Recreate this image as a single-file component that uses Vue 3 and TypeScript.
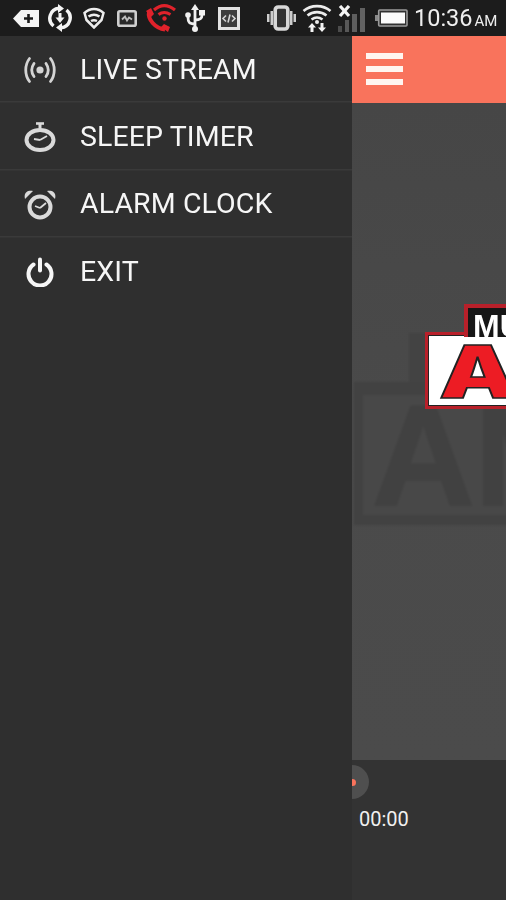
<script setup lang="ts">
const items = [
  { label: 'LIVE STREAM', icon: 'live' },
  { label: 'SLEEP TIMER', icon: 'sleep' },
  { label: 'ALARM CLOCK', icon: 'alarm' },
  { label: 'EXIT', icon: 'exit' },
]
</script>

<template>
  <div class="phone">
    <header class="status">
      <svg class="s-key" width="26" height="17" viewBox="0 0 26 17"><path d="M0 8.500 8 0h18v17H8z" fill="#f4f4f4"/><path d="M15.500 4v9M11 8.500h9" stroke="#1b1b1b" stroke-width="2.600"/></svg>
      <svg class="s-sync" width="26" height="28" viewBox="0 0 26 28" fill="none" stroke="#f4f4f4" stroke-width="3.400"><path d="M6.500 22A10 10 0 0 1 12 4.300"/><path d="M19.500 6A10 10 0 0 1 14 23.700"/><path d="M11 0v9l6-4.500zM15 28v-9l-6 4.500z" fill="#f4f4f4" stroke="none"/><path d="M13 9v6" stroke-width="3"/><path d="M8.500 13.500h9L13 19z" fill="#f4f4f4" stroke="none"/></svg>
      <svg class="s-shield" width="22" height="22" viewBox="0 0 22 22" fill="none" stroke="#ececec" stroke-width="2.500"><path d="M1.500 6C7 .8 15 .8 20.500 6L18.500 13 11 20.500 3.500 13z"/><path d="M5.500 9.500c3.500-2.300 7.500-2.300 11 0"/><path d="M8 14c2-1 4-1 6 0"/></svg>
      <svg class="s-box" width="20" height="17" viewBox="0 0 20 17"><rect x="1.300" y="1.300" width="17.400" height="14.400" rx="1.500" fill="#2a2a2a" stroke="#cfcfcf" stroke-width="2.600"/><path d="M5 9.500 8 6.500l2 4 2-3 3 2" fill="none" stroke="#bdbdbd" stroke-width="1.800"/></svg>
      <svg class="s-red" width="31" height="28" viewBox="0 0 31 28" fill="none" stroke="#e0222b"><path d="M9 6c6.500-5.500 14-5.500 21 0" stroke-width="3.200"/><path d="M13.500 10.500c3.500-2.500 8-2.500 12 0" stroke-width="3"/><circle cx="19.500" cy="14.500" r="2.200" fill="#e0222b" stroke="none"/><path d="M4 8C2.500 15 10 24.500 20 25.500" stroke-width="4"/><path d="M1 7 6 4l3 6-3 3zM16 23l3-3 6 3-2 5z" fill="#e0222b" stroke="none"/></svg>
      <svg class="s-usb" width="20" height="28" viewBox="0 0 20 28" fill="none" stroke="#f0f0f0" stroke-width="2.800"><path d="M10 3v22"/><path d="M10 20c-6 0-7-2-7-7"/><path d="M10 16c6 0 7-2 7-5"/><circle cx="3" cy="11" r="2.800" fill="#f0f0f0" stroke="none"/><rect x="14" y="6" width="6" height="5.500" fill="#f0f0f0" stroke="none"/><path d="M10 0 6 6h8z" fill="#f0f0f0" stroke="none"/><circle cx="10" cy="25" r="3" fill="#f0f0f0" stroke="none"/></svg>
      <svg class="s-code" width="22" height="23" viewBox="0 0 22 23" fill="none"><rect x="1.500" y="1.500" width="19" height="20" fill="#3c3c3c" stroke="#e2e2e2" stroke-width="3"/><path d="M8 8.500 5 11.500l3 3M14 8.500l3 3-3 3M12 7.500l-2 8" stroke="#d4d4d4" stroke-width="1.600"/></svg>

      <svg class="s-vib" width="29" height="26" viewBox="0 0 29 26" fill="#cdcdcd"><rect x="8.200" y="2" width="12.600" height="22" rx="3" fill="#333" stroke="#d8d8d8" stroke-width="3.600"/><path d="M0 9h2.500v8H0zM3.500 6H6v14H3.500zM23 6h2.500v14H23zM26.500 9H29v8h-2.500z"/></svg>
      <svg class="s-wifi" width="30" height="28" viewBox="0 0 30 28" fill="none" stroke="#ececec" stroke-width="2.600"><path d="M1.500 7c7.500-6.500 19.500-6.500 27 0"/><path d="M5.500 11.500c5.500-4.500 13.500-4.500 19 0"/><path d="M9.500 15.500c3.500-2.500 7.500-2.500 11 0"/><circle cx="15" cy="18" r="2" fill="#ececec" stroke="none"/><path d="M10 19l-4 4.500h2.500V28h3v-4.500H14zM20 28l4-4.500h-2.500V19h-3v4.500H16z" fill="#f4f4f4" stroke="none"/></svg>
      <svg class="s-sig" width="28" height="27" viewBox="0 0 28 27"><rect x="0" y="21" width="4" height="6" fill="#4c4c4c"/><rect x="7" y="15" width="4" height="12" fill="#585858"/><rect x="14" y="9" width="5" height="18" fill="#5e5e5e"/><rect x="22" y="3" width="5" height="24" fill="#626262"/><path d="M2 1l9 10M11 1 2 11" stroke="#f4f4f4" stroke-width="3.200"/></svg>
      <svg class="s-bat" width="33" height="18" viewBox="0 0 33 18"><rect x="3.700" y="1" width="28.300" height="16" rx="1" fill="#303030" stroke="#9a9a9a" stroke-width="1.600"/><rect x="0" y="6" width="3" height="6" fill="#8a8a8a"/><rect x="6" y="3.500" width="24" height="11" fill="#fbfbfb"/></svg>
      <span class="clock">10:36<small>AM</small></span>
    </header>

    <div class="content">
      <nav class="drawer">
        <a v-for="item in items" :key="item.label" class="row">
          <span class="icon">
            <svg v-if="item.icon === 'live'" width="32" height="30" viewBox="0 0 32 30" fill="none" stroke="#d4d4d4" stroke-width="2.800" stroke-linecap="round"><circle cx="16" cy="15" r="3.600" fill="#d4d4d4" stroke="none"/><path d="M10 8.500c-2.800 4-2.800 9 0 13"/><path d="M22 8.500c2.800 4 2.800 9 0 13"/><path d="M5.500 3.500C.5 10 .5 20 5.500 26.500"/><path d="M26.500 3.500c5 6.500 5 16.500 0 23"/></svg>
            <svg v-else-if="item.icon === 'sleep'" width="32" height="30" viewBox="0 0 32 30" fill="none" stroke="#dadada"><ellipse cx="16" cy="18" rx="13.500" ry="10" stroke-width="4"/><path d="M12 1.500h8" stroke-width="2.600"/><path d="M16 1.500v5" stroke-width="3"/><path d="M16 18l7-4M16 18l-6-1" stroke-width="1.800"/></svg>
            <svg v-else-if="item.icon === 'alarm'" width="32" height="30" viewBox="0 0 32 30" fill="none" stroke="#dadada"><circle cx="16" cy="17" r="10.500" stroke-width="4"/><path d="M1 9C-.500 3 3 0 9 1z" fill="#dadada" stroke="none"/><path d="M31 9c1.500-6-2-9-8-8z" fill="#dadada" stroke="none"/><path d="M16 18l6-5M16 18l-5-2" stroke-width="1.800"/></svg>
            <svg v-else width="32" height="30" viewBox="0 0 32 30" fill="none" stroke="#f6f6f6" stroke-width="4" stroke-linecap="round"><path d="M9.500 7.500a11.500 11.500 0 1 0 13 0"/><path d="M16 2.500v11"/></svg>
          </span>
          <span class="label">{{ item.label }}</span>
        </a>
      </nav>

      <main class="main">
        <div class="topbar">
          <span class="burger"><i></i><i></i><i></i></span>
        </div>
        <div class="stage">
          <div class="watermark">
            <div class="wm-step"></div>
            <div class="wm"><span>AM</span></div>
          </div>
          <div class="logo-box"><span>A</span></div>
          <div class="logo-tab"><span>MU</span></div>
        </div>
        <div class="player">
          <span class="thumb"><i></i></span>
          <span class="time">00:00</span>
        </div>
      </main>
    </div>
  </div>
</template>

<style>
html, body { margin: 0; background: #2f2f2f; }
</style>

<style scoped>
.phone {
  width: 506px;
  height: 900px;
  display: flex;
  flex-direction: column;
  overflow: hidden;
  font-family: Roboto, "Liberation Sans", sans-serif;
  filter: blur(0.5px);
}
.status {
  height: 36px;
  flex: none;
  background: #1c1c1c;
  display: flex;
  align-items: center;
  padding-left: 13px;
  box-sizing: border-box;
}
.status svg { display: block; flex: none; }
.s-sync { margin-left: 8px; }
.s-shield { margin-left: 10px; margin-top: -1px; }
.s-box { margin-left: 12px; }
.s-red { margin-left: 8px; }
.s-usb { margin-left: 9px; }
.s-code { margin-left: 13px; }
.s-vib { margin-left: 27px; }
.s-wifi { margin-left: 6px; }
.s-sig { margin-left: 6px; }
.s-bat { margin-left: 9px; }
.clock { color: #eeeeee; font-size: 23.500px; margin-left: 6px; white-space: nowrap; }
.clock small { font-size: 15px; margin-left: 2px; }
.content { flex: 1; display: flex; min-height: 0; }
.drawer { width: 352px; flex: none; background: #2f2f2f; }
.row {
  height: 66px;
  margin-bottom: 1.500px;
  box-shadow: 0 1.500px 0 #3a3a3a;
  display: flex;
  align-items: center;
  padding: 3px 0 0 24px;
  box-sizing: border-box;
}
.row:first-child { height: 65px; }
.row:last-child { box-shadow: none; }
.icon { width: 56px; display: flex; }
.label {
  color: #f6f6f6;
  font-size: 28.500px;
  letter-spacing: 0.100px;
  line-height: 1;
  white-space: nowrap;
}
.main { flex: 1; display: flex; flex-direction: column; min-width: 0; }
.topbar {
  height: 67px;
  flex: none;
  background: #f9735c;
  display: flex;
  align-items: center;
  padding: 0 0 2px 14px;
  box-sizing: border-box;
}
.burger { width: 37px; display: flex; flex-direction: column; gap: 7px; }
.burger i { display: block; height: 6px; background: #fff5f0; }
.stage {
  flex: 1;
  position: relative;
  overflow: hidden;
  background: linear-gradient(#464646, #4a4a4a 50%, #4b4b4b);
}
.watermark { position: absolute; inset: 0; filter: blur(1.2px); }
.wm-step { position: absolute; left: 57px; top: 230px; right: 0; height: 50px; background: #434343; }
.wm {
  position: absolute;
  left: 2px;
  top: 279px;
  right: -20px;
  height: 143px;
  box-sizing: border-box;
  border: solid #424242;
  border-width: 13px 9px 10px;
  background: #484848;
  overflow: hidden;
}
.wm span {
  position: absolute;
  left: 9px;
  top: -10px;
  color: #414141;
  font: 700 142px/1 "Liberation Sans", sans-serif;
  -webkit-text-stroke: 2px #414141;
  white-space: nowrap;
}
.logo-tab {
  position: absolute;
  left: 112px;
  top: 201px;
  width: 70px;
  height: 33px;
  box-sizing: border-box;
  background: #161616;
  border: solid #b8202a;
  border-width: 4px 4px 0;
  overflow: hidden;
}
.logo-tab span { position: absolute; left: 5px; top: 2px; color: #fff; font: 700 32px/1 "Liberation Sans", sans-serif; }
.logo-box {
  position: absolute;
  left: 73px;
  top: 229px;
  width: 120px;
  height: 77px;
  box-sizing: border-box;
  background: #fff;
  border: 3px solid #b8202a;
  outline: 1px solid #222;
  outline-offset: -4px;
  overflow: hidden;
}
.logo-box span {
  position: absolute;
  left: 11px;
  top: 0;
  color: #ed1c24;
  font: 900 73px/1 Inter, "Liberation Sans", sans-serif;
  -webkit-text-stroke: 1.500px #222;
  transform: scaleX(1.35);
  transform-origin: left center;
}
.player {
  height: 140px;
  flex: none;
  background: #333333;
  position: relative;
  overflow: hidden;
}
.thumb {
  position: absolute;
  left: -17px;
  top: 5px;
  width: 34px;
  height: 34px;
  border-radius: 50%;
  background: #4f4f4f;
  display: flex;
  align-items: center;
  justify-content: center;
}
.thumb i { width: 7px; height: 7px; border-radius: 50%; background: #f9735c; }
.time {
  position: absolute;
  left: 7px;
  top: 47px;
  color: #f0f0f0;
  font-size: 20px;
  line-height: 24px;
}
</style>
